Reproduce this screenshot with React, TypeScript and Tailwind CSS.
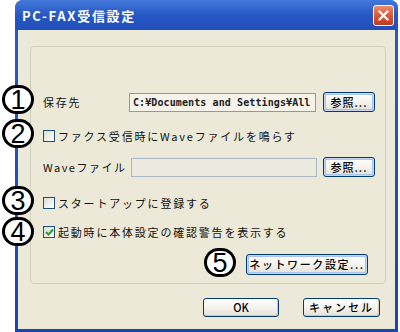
import React from "react";

const jp = { fontFamily: '"Noto Sans CJK JP", "Noto Sans", sans-serif' };

function Circle({ n, className }: { n: string; className: string }) {
  return (
    <div
      className={
        "absolute w-[32px] h-[29px] rounded-full border-[3px] border-black bg-white flex items-center justify-center text-[27px] leading-none text-black " +
        className
      }
      style={{ fontFamily: '"Liberation Sans", Arial, sans-serif' }}
    >
      <span className="mt-[1px]">{n}</span>
    </div>
  );
}

function Check({ checked }: { checked?: boolean }) {
  return (
    <div className="w-[12px] h-[12px] border border-[#1C5180] bg-gradient-to-br from-[#DCDCD7] to-white flex items-center justify-center shrink-0">
      {checked && (
        <svg width="9" height="8" viewBox="0 0 9 8">
          <path d="M1 4 L3.5 6.5 L8 1.5" stroke="#21A121" strokeWidth="2" fill="none" />
        </svg>
      )}
    </div>
  );
}

function XpButton({
  children,
  className,
  glow,
}: {
  children: React.ReactNode;
  className: string;
  glow?: boolean;
}) {
  return (
    <div
      className={
        "flex items-center justify-center rounded-[3px] border border-[#003C74] bg-gradient-to-b from-white via-[#F4F3EE] to-[#E3E1D6] text-[11px] text-black font-medium " +
        (glow
          ? "shadow-[inset_0_0_0_1px_#C5D7F3,inset_0_0_0_2px_#A9C3EE] "
          : "shadow-[inset_-1px_-1px_0_#CDCABB] ") +
        className
      }
      style={jp}
    >
      {children}
    </div>
  );
}

export default function App() {
  return (
    <div className="relative w-[400px] h-[332px] bg-white overflow-hidden" style={jp}>
      <div className="ml-[15px] mr-[2px] h-full flex flex-col rounded-t-[8px] bg-gradient-to-b from-[#2A5BC6] to-[#1B46AB]">
        {/* title bar */}
        <div className="h-[30px] flex items-center justify-between pl-[7px] pr-[4px] rounded-t-[8px] bg-gradient-to-b from-[#4479DA] via-[#2757C4] to-[#214FBA]">
          <span className="text-white font-bold text-[13px] tracking-[1.7px] mt-[1px]">PC-FAX受信設定</span>
          <div className="w-[21px] h-[21px] rounded-[3px] border border-white bg-gradient-to-b from-[#E98A6E] via-[#D9583B] to-[#C03A1E] flex items-center justify-center mt-[1px]">
            <svg width="11" height="11" viewBox="0 0 11 11">
              <path d="M1.5 1.5 L9.5 9.5 M9.5 1.5 L1.5 9.5" stroke="white" strokeWidth="2.2" strokeLinecap="square" />
            </svg>
          </div>
        </div>
        {/* body */}
        <div className="flex-1 mx-[3px] mb-[3px] bg-[#ECE9D8] flex flex-col pl-[12px] pr-[9px] pt-[16px]">
          <div className="h-[238px] border border-[#D0D0BF] rounded-[4px] flex flex-col pl-[12px] text-[11px] tracking-[1.8px] text-[#111]">
            {/* row 1 */}
            <div className="h-[20px] mt-[45px] flex items-center">
              <span className="w-[86px]">保存先</span>
              <div className="w-[187px] h-[19px] border border-[#7F9DB9] bg-[#F5F3EA] flex items-center pl-[3px] overflow-hidden whitespace-nowrap">
                <span
                  className="text-[10px] tracking-[0.1px] font-bold text-[#222]"
                  style={{ fontFamily: '"DejaVu Sans Mono", "Liberation Mono", monospace' }}
                >
                  C:¥Documents and Settings¥All
                </span>
              </div>
              <XpButton glow className="ml-[7px] w-[52px] h-[20px] tracking-[1px]">参照...</XpButton>
            </div>
            {/* row 2 */}
            <div className="h-[14px] mt-[17px] flex items-center">
              <Check />
              <span className="ml-[3px]">ファクス受信時にWaveファイルを鳴らす</span>
            </div>
            {/* row 3 */}
            <div className="h-[20px] mt-[14px] flex items-center">
              <span className="w-[88px] tracking-[1.5px]">Waveファイル</span>
              <div className="w-[186px] h-[19px] border border-[#A9B8C8] bg-[#ECEADF]" />
              <XpButton glow className="ml-[6px] w-[52px] h-[20px] tracking-[1px]">参照...</XpButton>
            </div>
            {/* row 4 */}
            <div className="h-[14px] mt-[19px] flex items-center">
              <Check />
              <span className="ml-[3px]">スタートアップに登録する</span>
            </div>
            {/* row 5 */}
            <div className="h-[14px] mt-[15px] flex items-center">
              <Check checked />
              <span className="ml-[3px]">起動時に本体設定の確認警告を表示する</span>
            </div>
            {/* row 6 */}
            <div className="h-[21px] mt-[15px] flex justify-end pr-[17px]">
              <XpButton glow className="w-[122px] h-[21px] tracking-[1.6px]">ネットワーク設定...</XpButton>
            </div>
          </div>
          <div className="mt-[14px] flex justify-end gap-[24px] pr-[6px]">
            <XpButton className="w-[76px] h-[19px] text-[10px] font-bold">OK</XpButton>
            <XpButton className="w-[77px] h-[19px] tracking-[2px]">キャンセル</XpButton>
          </div>
        </div>
      </div>
      <Circle n="1" className="left-[2px] top-[85px]" />
      <Circle n="2" className="left-[2px] top-[119px]" />
      <Circle n="3" className="left-[2px] top-[186px]" />
      <Circle n="4" className="left-[2px] top-[217px]" />
      <Circle n="5" className="left-[204px] top-[248px]" />
    </div>
  );
}
